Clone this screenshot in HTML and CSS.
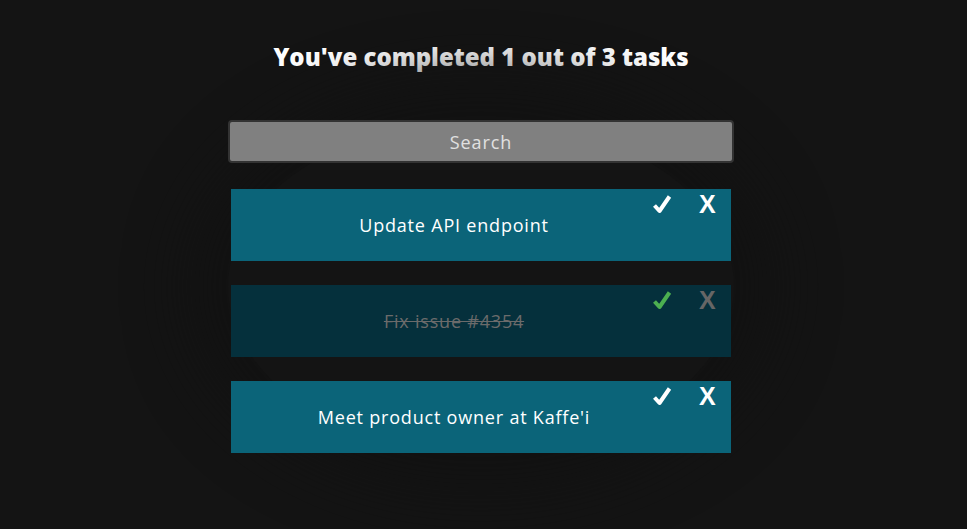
FILE: index.html
```html
<!DOCTYPE html>
<html lang="en">
<head>
<meta charset="utf-8">
<title>Tasks</title>
<link rel="stylesheet" href="styles.css">
</head>
<body>
<main class="app">
  <h1 class="title">You've completed 1 out of 3 tasks</h1>
  <div class="panel">
    <input class="search" type="text" placeholder="Search">
    <ul class="tasks">
      <li class="task">
        <span class="task-text">Update API endpoint</span>
        <div class="actions">
          <button class="btn check" aria-label="Complete"><svg viewBox="0 0 20 20" width="20" height="20"><path d="M2.5 11.5 L7.5 17 L17.5 2.5" fill="none" stroke="currentColor" stroke-width="4" stroke-linejoin="round"/></svg></button>
          <button class="btn del">X</button>
        </div>
      </li>
      <li class="task done">
        <span class="task-text">Fix issue #4354</span>
        <div class="actions">
          <button class="btn check" aria-label="Complete"><svg viewBox="0 0 20 20" width="20" height="20"><path d="M2.5 11.5 L7.5 17 L17.5 2.5" fill="none" stroke="currentColor" stroke-width="4" stroke-linejoin="round"/></svg></button>
          <button class="btn del">X</button>
        </div>
      </li>
      <li class="task">
        <span class="task-text">Meet product owner at Kaffe'i</span>
        <div class="actions">
          <button class="btn check" aria-label="Complete"><svg viewBox="0 0 20 20" width="20" height="20"><path d="M2.5 11.5 L7.5 17 L17.5 2.5" fill="none" stroke="currentColor" stroke-width="4" stroke-linejoin="round"/></svg></button>
          <button class="btn del">X</button>
        </div>
      </li>
    </ul>
  </div>
</main>
</body>
</html>
```
FILE: styles.css
```css
* { box-sizing: border-box; }
html, body { margin: 0; padding: 0; }
body {
  background: #141414;
  font-family: "Open Sans", "Liberation Sans", sans-serif;
  color: #fff;
  height: 529px;
  overflow: hidden;
}
.app {
  display: flex;
  flex-direction: column;
  align-items: center;
  padding-top: 40px;
  padding-right: 5px;
}
.title {
  margin: 0;
  font-size: 24px;
  font-weight: 800;
  letter-spacing: 0;
  line-height: 34px;
}
.panel {
  margin-top: 46px;
  width: 506px;
  display: flex;
  flex-direction: column;
  align-items: center;
  box-shadow: 0 0 60px 40px #121212;
  border-radius: 50%;
}
.search {
  width: 506px;
  height: 43px;
  background: #808080;
  border: 2px solid #333;
  border-radius: 4px;
  color: #ddd;
  font-family: inherit;
  font-size: 18px;
  letter-spacing: 0.9px;
  text-align: center;
  outline: none;
}
.search::placeholder { color: #e0e0e0; }
.tasks {
  list-style: none;
  margin: 26px 0 0;
  padding: 0;
  display: flex;
  flex-direction: column;
  gap: 24px;
}
.task {
  width: 500px;
  height: 72px;
  background: #0b6479;
  display: flex;
  align-items: flex-start;
}
.task-text {
  flex: 1;
  text-align: center;
  padding-left: 38px;
  padding-top: 23px;
  font-size: 18px;
  letter-spacing: 0.8px;
  line-height: 26px;
  color: #fff;
}
.actions {
  width: 92px;
  display: flex;
  align-items: center;
  gap: 27px;
  padding-left: 13px;
  padding-top: 3px;
}
.btn {
  background: none;
  border: none;
  padding: 0;
  margin: 0;
  color: #fff;
  cursor: pointer;
  display: flex;
}
.btn svg { display: block; }
.btn.del {
  font-family: "Liberation Sans", sans-serif;
  font-weight: 700;
  font-size: 25px;
  line-height: 24px;
}
.task.done { background: #05303c; }
.task.done .task-text { color: #6b6b6b; text-decoration: line-through; }
.task.done .check { color: #4caf50; }
.task.done .del { color: #666; }
```
